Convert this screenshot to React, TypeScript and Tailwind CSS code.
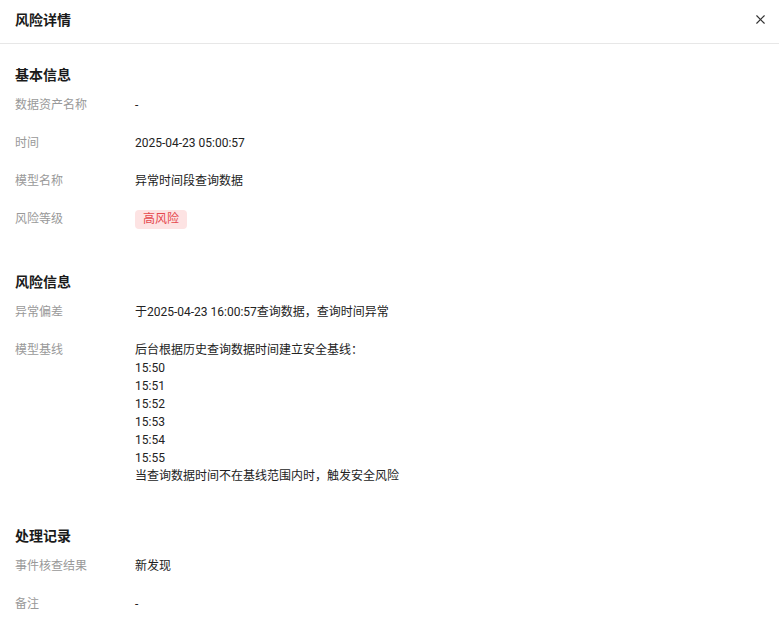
import React from 'react';
import { X } from 'lucide-react';

interface RowProps {
  label: string;
  children: React.ReactNode;
}

const Row: React.FC<RowProps> = ({ label, children }) => (
  <div className="flex mb-5 text-xs leading-[18px]">
    <div className="w-[120px] shrink-0 text-[#999999]">{label}</div>
    <div className="flex-1 text-[#222222]">{children}</div>
  </div>
);

const Section: React.FC<{ title: string; children: React.ReactNode }> = ({ title, children }) => (
  <section className="mb-[5px]">
    <h3 className="text-sm font-bold leading-5 text-[#1a1a1a] mb-[11px]">{title}</h3>
    {children}
  </section>
);

const baseline = ['15:50', '15:51', '15:52', '15:53', '15:54', '15:55'];

export default function App() {
  return (
    <div
      className="w-[779px] h-[635px] bg-white overflow-hidden"
      style={{ fontFamily: 'Roboto, "Noto Sans CJK SC", sans-serif' }}
    >
      {/* header */}
      <div className="h-11 flex items-center justify-between pl-[15px] pr-[11px] border-b border-[#e7e7e7]">
        <h2 className="text-sm font-bold text-[#1a1a1a] pb-1">风险详情</h2>
        <button className="text-[#333333] pb-1" aria-label="close">
          <X size={15} strokeWidth={1.8} />
        </button>
      </div>

      <div className="px-[15px] pt-[21px]">
        <Section title="基本信息">
          <Row label="数据资产名称">-</Row>
          <Row label="时间">2025-04-23 05:00:57</Row>
          <Row label="模型名称">异常时间段查询数据</Row>
          <Row label="风险等级">
            <span className="inline-block px-2 leading-[19px] rounded-sm bg-[#fde3e3] text-[#e5484d]">
              高风险
            </span>
          </Row>
        </Section>

        <div className="h-[23px]" />

        <Section title="风险信息">
          <Row label="异常偏差">于2025-04-23 16:00:57查询数据，查询时间异常</Row>
          <Row label="模型基线">
            <div>后台根据历史查询数据时间建立安全基线：</div>
            {baseline.map((t) => (
              <div key={t}>{t}</div>
            ))}
            <div>当查询数据时间不在基线范围内时，触发安全风险</div>
          </Row>
        </Section>

        <div className="h-[21px]" />

        <Section title="处理记录">
          <Row label="事件核查结果">新发现</Row>
          <Row label="备注">-</Row>
        </Section>
      </div>
    </div>
  );
}
